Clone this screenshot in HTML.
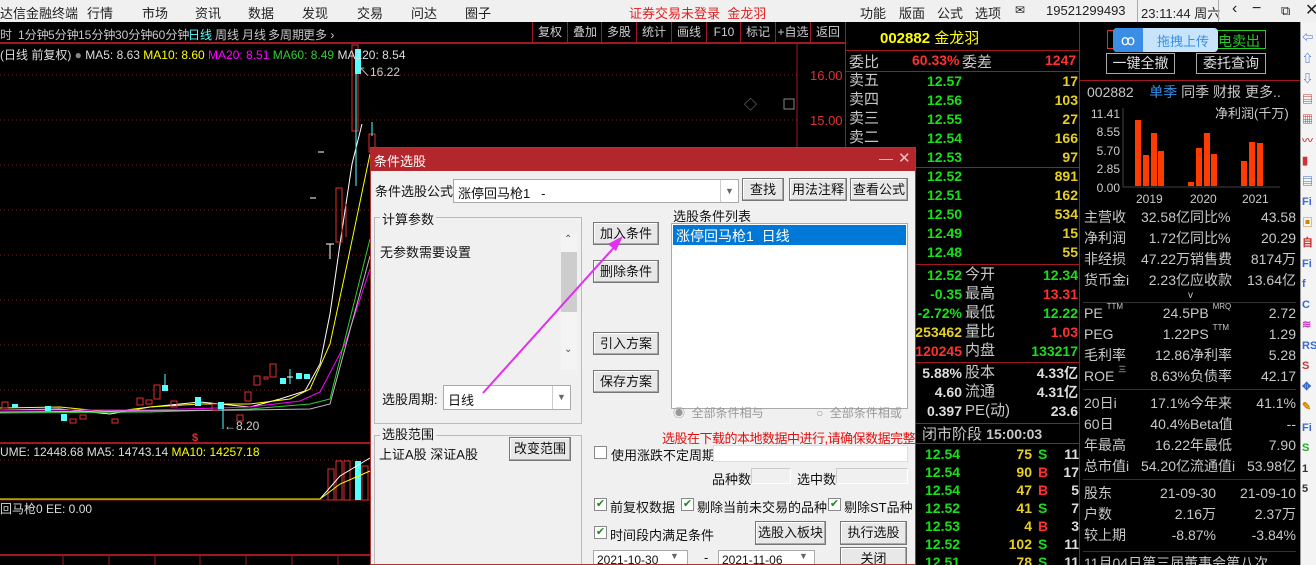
<!DOCTYPE html>
<html style="width:1316px;height:565px;overflow:hidden"><head><meta charset="utf-8">
<style>
*{margin:0;padding:0;box-sizing:border-box}
body{width:1316px;height:565px;overflow:hidden;background:#000;position:relative;font-family:"Liberation Sans","Noto Sans CJK SC",sans-serif;font-size:13px;color:#c8c8c8}
.a{position:absolute;white-space:nowrap}
.menu{left:0;top:0;width:1316px;height:22px;background:#f0f0f0;color:#222;font-size:13px}
.menu .a{top:3px}
.bar2{left:0;top:22px;width:845px;height:22px;background:#000;border-bottom:2px solid #a01820;color:#c8c8c8;font-size:12px}
.bar2 .a{top:4px}
.cell{top:0 !important;height:20px;border-left:1px solid #a01820;text-align:center;width:35px;line-height:20px;font-size:12px;color:#ccc}
.q{font-size:14px;font-weight:bold}
.g{color:#18e018}.y{color:#e8d020}.r{color:#ff3030}.w{color:#ddd}
.lbl{font-size:15px;color:#c8c8c8;font-weight:normal}
.hl{position:absolute;height:1px;background:#a01820}
.f{font-size:14px;color:#c8c8c8}
.sp{font-size:8px;vertical-align:top;line-height:0;position:relative;top:4px}
.dlg{left:370px;top:147px;width:546px;height:418px;overflow:hidden;background:#f0f0f0;border:1px solid #a33;color:#111;font-size:13px}
.btn{position:absolute;background:#e8e8e8;border:1px solid #777;box-shadow:inset -1px -1px 0 #aaa,inset 1px 1px 0 #fff;text-align:center;font-size:13px;color:#111}
.box{position:absolute;background:#fff;border:1px solid #aaa}
.grp{position:absolute;border:1px solid #bbb}
.cb{position:absolute;width:13px;height:13px;border:1px solid #888;background:#fff;font-size:11px;line-height:11px;color:#1a8a1a;text-align:center}
</style></head><body>

<div class="a menu">
<span class="a" style="left:0">达信金融终端</span><span class="a" style="left:87px">行情</span><span class="a" style="left:142px">市场</span><span class="a" style="left:195px">资讯</span><span class="a" style="left:248px">数据</span><span class="a" style="left:302px">发现</span><span class="a" style="left:357px">交易</span><span class="a" style="left:411px">问达</span><span class="a" style="left:465px">圈子</span>
<span class="a" style="left:629px;color:#e02020;font-size:13px">证券交易未登录&nbsp;&nbsp;金龙羽</span>
<span class="a" style="left:860px">功能</span><span class="a" style="left:899px">版面</span><span class="a" style="left:937px">公式</span><span class="a" style="left:975px">选项</span><span class="a" style="left:1015px;font-size:12px">✉</span><span class="a" style="left:1046px;font-size:13px">19521299493</span>
<div class="a" style="left:1137px;top:0;width:1px;height:22px;background:#aaa"></div>
<span class="a" style="left:1141px;font-size:13px">23:11:44 周六</span>
<div class="a" style="left:1218px;top:0;width:1px;height:22px;background:#aaa"></div>
<span class="a" style="left:1232px;font-size:16px;top:0">‹</span><span class="a" style="left:1252px;font-size:16px;top:0">−</span><span class="a" style="left:1281px;font-size:13px">⧉</span><span class="a" style="left:1305px;font-size:16px;top:0">✕</span>
</div>

<div class="a bar2">
<span class="a" style="left:0">时</span><span class="a" style="left:18px">1分钟</span><span class="a" style="left:48px">5分钟</span><span class="a" style="left:78px">15分钟</span><span class="a" style="left:115px">30分钟</span><span class="a" style="left:152px">60分钟</span><span class="a" style="left:188px;color:#5ff">日线</span><span class="a" style="left:215px">周线</span><span class="a" style="left:242px">月线</span><span class="a" style="left:268px">多周期</span><span class="a" style="left:303px">更多 ›</span>
<div class="a cell" style="left:532px">复权</div><div class="a cell" style="left:567px">叠加</div><div class="a cell" style="left:601px">多股</div><div class="a cell" style="left:636px">统计</div><div class="a cell" style="left:671px">画线</div><div class="a cell" style="left:706px">F10</div><div class="a cell" style="left:740px">标记</div><div class="a cell" style="left:775px">+自选</div><div class="a cell" style="left:810px">返回</div>
</div>

<svg class="a" style="left:0;top:44px" width="845" height="521">
<g stroke="#802020" stroke-dasharray="1,3" stroke-width="1">
<line x1="0" y1="31" x2="797" y2="31"/><line x1="0" y1="76" x2="797" y2="76"/><line x1="0" y1="121" x2="797" y2="121"/><line x1="0" y1="166" x2="797" y2="166"/><line x1="0" y1="211" x2="797" y2="211"/><line x1="0" y1="256" x2="797" y2="256"/><line x1="0" y1="301" x2="797" y2="301"/><line x1="0" y1="346" x2="797" y2="346"/><line x1="0" y1="416" x2="797" y2="416"/>
</g>
<line x1="797" y1="0" x2="797" y2="510" stroke="#a01820"/>
<line x1="0" y1="399" x2="797" y2="399" stroke="#a01820" stroke-width="2"/>
<line x1="0" y1="511" x2="797" y2="511" stroke="#a01820" stroke-width="2"/>
<line x1="0" y1="456" x2="370" y2="456" stroke="#a01820"/>
<text x="810" y="36" fill="#e03030" font-size="13">16.00</text>
<text x="810" y="81" fill="#e03030" font-size="13">15.00</text>
<text x="744" y="65" fill="#888" font-size="13">◇</text>
<rect x="784" y="55" width="10" height="10" fill="none" stroke="#888"/>
<polyline fill="none" stroke="#fff" points="0,366 60,365 110,370 150,363 200,358 250,363 280,355 305,347 320,320 330,270 340,200 352,120 362,80"/>
<polyline fill="none" stroke="#ff0" points="0,364 60,363 110,368 150,363 200,360 250,360 290,355 310,345 330,300 345,230 370,110"/>
<polyline fill="none" stroke="#f0f" points="0,366 100,366 150,366 250,363 300,357 320,348 345,300 370,225"/>
<polyline fill="none" stroke="#3c3" points="0,369 150,368 250,365 310,360 330,355 370,195"/>
<polyline fill="none" stroke="#bbb" points="0,368 250,366 310,365 330,360 370,212"/>
<g fill="none" stroke="#e03030">
<rect x="2" y="358" width="6" height="6"/><rect x="70" y="375" width="6" height="4"/><rect x="80" y="371" width="6" height="4"/><rect x="112" y="375" width="6" height="4"/><rect x="137" y="354" width="6" height="7"/><rect x="146" y="356" width="6" height="4"/><rect x="154" y="341" width="6" height="14"/><rect x="171" y="357" width="6" height="6"/><rect x="212" y="360" width="6" height="6"/><rect x="237" y="371" width="6" height="6"/><rect x="245" y="348" width="6" height="9"/><rect x="254" y="332" width="6" height="9"/><rect x="264" y="333" width="4" height="2"/><rect x="270" y="320" width="6" height="13"/><rect x="336" y="144" width="6" height="54"/><rect x="352" y="1" width="6" height="86"/><rect x="369" y="90" width="6" height="18"/>
<line x1="346" y1="160" x2="346" y2="193"/>
</g>
<g fill="#5ff">
<rect x="12" y="360" width="6" height="4"/><rect x="45" y="362" width="6" height="5"/><rect x="61" y="370" width="6" height="7"/><rect x="162" y="341" width="6" height="6"/><rect x="195" y="353" width="6" height="9"/><rect x="218" y="358" width="6" height="7"/><rect x="280" y="334" width="6" height="6"/><rect x="296" y="329" width="6" height="6"/><rect x="304" y="330" width="6" height="5"/><rect x="355" y="5" width="6" height="25"/>
</g>
<g stroke="#5ff"><line x1="223" y1="358" x2="223" y2="385"/><line x1="165" y1="330" x2="165" y2="347"/><line x1="290" y1="325" x2="290" y2="340"/><line x1="356" y1="19" x2="356" y2="142"/><line x1="372" y1="78" x2="372" y2="92"/></g>
<g stroke="#fff"><line x1="326" y1="200" x2="334" y2="200"/><line x1="330" y1="200" x2="330" y2="215"/><line x1="318" y1="108" x2="324" y2="108"/><line x1="310" y1="154" x2="316" y2="154"/><line x1="287" y1="333" x2="293" y2="333"/></g>
<text x="358" y="32" fill="#ccc" font-size="12">↖16.22</text>
<text x="224" y="386" fill="#ccc" font-size="12">←8.20</text>
<text x="192" y="397" fill="#e03030" font-size="11" font-weight="bold">$</text>
<g fill="none" stroke="#e03030"><rect x="328" y="425" width="6" height="31"/><rect x="336" y="417" width="6" height="39"/><rect x="344" y="417" width="6" height="39"/><rect x="362" y="422" width="6" height="34"/></g>
<rect x="355" y="417" width="6" height="39" fill="#5ff"/>
<polyline fill="none" stroke="#fff" points="0,455 320,455 340,432 370,414"/>
<polyline fill="none" stroke="#ff0" points="0,455 320,455 340,440 370,427"/>
<text x="0" y="412" fill="#ddd" font-size="12">UME: 12448.68  MA5: 14743.14  <tspan fill="#ff0">MA10: 14257.18</tspan></text>
<text x="0" y="469" fill="#ddd" font-size="12">回马枪0  EE: 0.00</text>
<g stroke="#a01820"><line x1="63" y1="511" x2="63" y2="521"/><line x1="109" y1="511" x2="109" y2="521"/><line x1="155" y1="511" x2="155" y2="521"/><line x1="200" y1="511" x2="200" y2="521"/><line x1="246" y1="511" x2="246" y2="521"/><line x1="292" y1="511" x2="292" y2="521"/><line x1="338" y1="511" x2="338" y2="521"/></g>
</svg>
<div class="a" style="left:0;top:46px;font-size:12px;color:#ddd">(日线 前复权) <span style="color:#888">●</span> MA5: 8.63 <span style="color:#ff0">MA10: 8.60</span> <span style="color:#f0f">MA20: 8.51</span> <span style="color:#3c3">MA60: 8.49</span> MA120: 8.54</div>

<div class="a" style="left:845px;top:22px;width:235px;height:543px;border-left:1px solid #a01820;border-right:1px solid #a01820"></div>
<div class="a" style="left:880px;top:27px;font-size:15px;font-weight:bold;color:#ff0">002882 <span style="font-weight:normal">金龙羽</span></div>
<div class="hl" style="left:845px;top:50px;width:235px"></div>
<div class="a lbl" style="left:849px;top:51px">委比</div><div class="a q r" style="left:912px;top:52px">60.33%</div><div class="a lbl" style="left:962px;top:51px">委差</div><div class="a q r" style="left:1045px;top:52px">1247</div>
<div class="hl" style="left:845px;top:71px;width:235px"></div>
<div class="a lbl" style="left:849px;top:71px;line-height:19px">卖五<br>卖四<br>卖三<br>卖二</div>
<div class="a q g" style="left:927px;top:72px;line-height:19px">12.57<br>12.56<br>12.55<br>12.54<br>12.53<br>12.52<br>12.51<br>12.50<br>12.49<br>12.48</div>
<div class="a q y" style="left:1030px;top:72px;width:48px;text-align:right;line-height:19px">17<br>103<br>27<br>166<br>97<br>891<br>162<br>534<br>15<br>55</div>
<div class="hl" style="left:845px;top:167px;width:235px"></div>
<div class="hl" style="left:845px;top:264px;width:235px"></div>
<div class="a q" style="left:900px;top:266px;width:62px;text-align:right;line-height:19px"><span class="g">12.52</span><br><span class="g">-0.35</span><br><span class="g">-2.72%</span><br><span class="y">253462</span><br><span class="r">120245</span></div>
<div class="a lbl" style="left:965px;top:265px;line-height:19px">今开<br>最高<br>最低<br>量比<br>内盘</div>
<div class="a q" style="left:1020px;top:266px;width:58px;text-align:right;line-height:19px"><span class="g">12.34</span><br><span class="r">13.31</span><br><span class="g">12.22</span><br><span class="r">1.03</span><br><span class="g">133217</span></div>
<div class="hl" style="left:845px;top:362px;width:235px"></div>
<div class="a q w" style="left:900px;top:364px;width:62px;text-align:right;line-height:19px">5.88%<br>4.60<br>0.397</div>
<div class="a lbl" style="left:965px;top:363px;line-height:19px">股本<br>流通<br>PE(动)</div>
<div class="a q w" style="left:1020px;top:364px;width:58px;text-align:right;line-height:19px">4.33亿<br>4.31亿<br>23.6</div>
<div class="hl" style="left:845px;top:423px;width:235px"></div>
<div class="a lbl" style="left:922px;top:423px">闭市阶段 <b style="font-size:14px">15:00:03</b></div>
<div class="hl" style="left:845px;top:443px;width:235px"></div>
<div class="a q g" style="left:925px;top:445px;line-height:18px">12.54<br>12.54<br>12.54<br>12.52<br>12.53<br>12.52<br>12.51</div>
<div class="a q y" style="left:990px;top:445px;width:42px;text-align:right;line-height:18px">75<br>90<br>47<br>41<br>4<br>102<br>78</div>
<div class="a q" style="left:1038px;top:445px;line-height:18px"><span class="g">S</span><br><span class="r">B</span><br><span class="r">B</span><br><span class="g">S</span><br><span class="r">B</span><br><span class="g">S</span><br><span class="g">S</span></div>
<div class="a q w" style="left:1055px;top:445px;width:24px;text-align:right;line-height:18px">11<br>17<br>5<br>7<br>3<br>11<br>11</div>

<div class="a" style="left:1107px;top:30px;width:62px;height:19px;border:1px solid #e03030"></div>
<div class="a" style="left:1214px;top:30px;width:52px;height:19px;border:1px solid #2c2;color:#2c2;font-size:14px;padding-left:3px">电卖出</div>
<div class="a" style="left:1113px;top:28px;width:105px;height:24px;background:#c8e4fa;border-radius:4px;color:#3a8ee6;font-size:13px;padding:3px 0 0 44px">拖拽上传</div>
<div class="a" style="left:1113px;top:28px;width:30px;height:24px;background:#3a8ee6;border-radius:4px 0 0 4px;color:#fff;text-align:center;font-size:14px;line-height:24px">ꝏ</div>
<div class="a" style="left:1106px;top:53px;width:69px;height:21px;border:1px solid #aaa;color:#ddd;font-size:14px;text-align:center;line-height:19px">一键全撤</div>
<div class="a" style="left:1196px;top:53px;width:70px;height:21px;border:1px solid #aaa;color:#ddd;font-size:14px;text-align:center;line-height:19px">委托查询</div>
<div class="hl" style="left:1080px;top:80px;width:220px"></div>
<div class="a f" style="left:1087px;top:82px">002882 &nbsp; &nbsp;<span style="color:#3a8ee6">单季</span> 同季 财报 更多..</div>
<svg class="a" style="left:1080px;top:104px" width="220" height="104">
<g fill="#ccc" font-size="12" text-anchor="end"><text x="40" y="14">11.41</text><text x="40" y="32">8.55</text><text x="40" y="51">5.70</text><text x="40" y="69">2.85</text><text x="40" y="88">0.00</text></g>
<line x1="43" y1="4" x2="43" y2="83" stroke="#444"/><line x1="43" y1="83" x2="200" y2="83" stroke="#444"/>
<g fill="#ff3c00"><rect x="55" y="16" width="6" height="66"/><rect x="63" y="51" width="6" height="31"/><rect x="71" y="29" width="6" height="53"/><rect x="78" y="47" width="6" height="35"/><rect x="108" y="78" width="6" height="4"/><rect x="116" y="44" width="6" height="38"/><rect x="124" y="29" width="6" height="53"/><rect x="131" y="50" width="6" height="32"/><rect x="161" y="57" width="6" height="25"/><rect x="169" y="38" width="6" height="44"/><rect x="177" y="39" width="6" height="43"/></g>
<text x="135" y="14" fill="#ccc" font-size="13">净利润(千万)</text>
<g fill="#ccc" font-size="12"><text x="56" y="99">2019</text><text x="110" y="99">2020</text><text x="162" y="99">2021</text></g>
</svg>
<div class="a f" style="left:1084px;top:207px;line-height:21px">主营收<br>净利润<br>非经损<br>货币金i</div>
<div class="a f" style="left:1130px;top:207px;width:60px;text-align:right;line-height:21px">32.58亿<br>1.72亿<br>47.22万<br>2.23亿</div>
<div class="a f" style="left:1190px;top:207px;line-height:21px">同比%<br>同比%<br>销售费<br>应收款</div>
<div class="a f" style="left:1240px;top:207px;width:56px;text-align:right;line-height:21px">43.58<br>20.29<br>8174万<br>13.64亿</div>
<div class="a" style="left:1188px;top:290px;font-size:10px;color:#ccc">v</div>
<div class="a" style="left:1083px;top:302px;width:213px;height:1px;background:#333"></div>
<div class="a f" style="left:1084px;top:303px;line-height:21px">PE <span class="sp">TTM</span><br>PEG<br>毛利率<br>ROE <span class="sp">三</span></div>
<div class="a f" style="left:1130px;top:303px;width:60px;text-align:right;line-height:21px">24.5<br>1.22<br>12.86<br>8.63%</div>
<div class="a f" style="left:1190px;top:303px;line-height:21px">PB <span class="sp">MRQ</span><br>PS <span class="sp">TTM</span><br>净利率<br>负债率</div>
<div class="a f" style="left:1240px;top:303px;width:56px;text-align:right;line-height:21px">2.72<br>1.29<br>5.28<br>42.17</div>
<div class="a" style="left:1083px;top:389px;width:213px;height:1px;background:#333"></div>
<div class="a f" style="left:1084px;top:393px;line-height:21px">20日i<br>60日<br>年最高<br>总市值i</div>
<div class="a f" style="left:1130px;top:393px;width:60px;text-align:right;line-height:21px">17.1%<br>40.4%<br>16.22<br>54.20亿</div>
<div class="a f" style="left:1190px;top:393px;line-height:21px">今年来<br>Beta值<br>年最低<br>流通值i</div>
<div class="a f" style="left:1240px;top:393px;width:56px;text-align:right;line-height:21px">41.1%<br>--<br>7.90<br>53.98亿</div>
<div class="a" style="left:1083px;top:479px;width:213px;height:1px;background:#333"></div>
<div class="a f" style="left:1084px;top:483px;line-height:21px">股东<br>户数<br>较上期</div>
<div class="a f" style="left:1150px;top:483px;width:66px;text-align:right;line-height:21px">21-09-30<br>2.16万<br>-8.87%</div>
<div class="a f" style="left:1226px;top:483px;width:70px;text-align:right;line-height:21px">21-09-10<br>2.37万<br>-3.84%</div>
<div class="a" style="left:1083px;top:551px;width:213px;height:1px;background:#333"></div>
<div class="a f" style="left:1084px;top:553px">11月04日第三届董事会第八次</div>

<div class="a" style="left:1300px;top:22px;width:16px;height:543px;background:#f4f4f4;border-left:1px solid #999"></div>
<div class="a" style="left:1302px;top:28px;width:14px;font-size:11px;line-height:20.5px;color:#3a6ad0;font-weight:bold">⇦<br>⇧<br>⇩<br><span style="color:#c33">▤</span><br><span style="color:#c33">▦</span><br><span style="color:#c33">〰</span><br><span style="color:#c33">▮</span><br>▤<br>Fi<br><span style="color:#c80">▣</span><br><span style="color:#c33">自</span><br>Fi<br>f<br>C<br><span style="color:#c3c">≋</span><br>RS<br><span style="color:#c33">S</span><br>✥<br><span style="color:#c80">✎</span><br>Fi<br><span style="color:#2a2">S</span><br><span style="color:#333">1</span><br><span style="color:#333">5</span></div>

<div class="a dlg">
<div class="a" style="left:0;top:0;width:544px;height:23px;background:#b3262c;color:#fff;font-size:13px;padding:3px 3px">条件选股</div>
<div class="a" style="left:508px;top:2px;color:#f0c0c0;font-size:14px">—</div><div class="a" style="left:527px;top:1px;color:#f0c0c0;font-size:15px">✕</div>
<div class="a" style="left:4px;top:33px">条件选股公式</div>
<div class="box" style="left:82px;top:31px;width:286px;height:24px;padding:3px 4px">涨停回马枪1 &nbsp; -</div>
<div class="a" style="left:349px;top:32px;width:18px;height:22px;border-left:1px solid #ccc;color:#666;font-size:9px;text-align:center;line-height:22px">▼</div>
<div class="btn" style="left:371px;top:30px;width:42px;height:23px;line-height:21px">查找</div>
<div class="btn" style="left:418px;top:30px;width:58px;height:23px;line-height:21px">用法注释</div>
<div class="btn" style="left:479px;top:30px;width:58px;height:23px;line-height:21px">查看公式</div>
<div class="grp" style="left:3px;top:69px;width:208px;height:207px"></div>
<div class="a" style="left:9px;top:61px;background:#f0f0f0;padding:0 2px">计算参数</div>
<div class="a" style="left:9px;top:94px">无参数需要设置</div>
<div class="a" style="left:190px;top:87px;width:16px;height:135px;background:#f4f4f4"></div>
<div class="a" style="left:190px;top:104px;width:16px;height:60px;background:#cdcdcd"></div>
<div class="a" style="left:193px;top:86px;font-size:10px;color:#555">⌃</div><div class="a" style="left:193px;top:196px;font-size:10px;color:#555">⌄</div>
<div class="a" style="left:11px;top:241px">选股周期:</div>
<div class="box" style="left:72px;top:237px;width:128px;height:25px;padding:4px 4px">日线</div>
<div class="a" style="left:181px;top:238px;width:18px;height:23px;border-left:1px solid #ccc;color:#666;font-size:9px;text-align:center;line-height:23px">▼</div>
<div class="btn" style="left:222px;top:74px;width:66px;height:23px;line-height:21px">加入条件</div>
<div class="btn" style="left:222px;top:112px;width:66px;height:23px;line-height:21px">删除条件</div>
<div class="btn" style="left:222px;top:184px;width:66px;height:23px;line-height:21px">引入方案</div>
<div class="btn" style="left:222px;top:222px;width:66px;height:23px;line-height:21px">保存方案</div>
<div class="a" style="left:302px;top:58px">选股条件列表</div>
<div class="box" style="left:300px;top:75px;width:237px;height:186px"></div>
<div class="a" style="left:302px;top:77px;width:233px;height:20px;background:#0078d7;color:#fff;font-size:14px;padding:1px 3px">涨停回马枪1 &nbsp;日线</div>
<div class="a" style="left:302px;top:256px;color:#999;font-size:12px">◉ &nbsp;全部条件相与</div>
<div class="a" style="left:445px;top:256px;color:#999;font-size:12px">○ &nbsp;全部条件相或</div>
<div class="a" style="left:291px;top:280px;color:#e01010;font-size:13px;letter-spacing:-0.5px">选股在下载的本地数据中进行,请确保数据完整</div>
<div class="grp" style="left:3px;top:287px;width:208px;height:140px"></div>
<div class="a" style="left:9px;top:276px;background:#f0f0f0;padding:0 2px">选股范围</div>
<div class="a" style="left:8px;top:296px">上证A股 深证A股</div>
<div class="btn" style="left:138px;top:289px;width:62px;height:24px;line-height:22px">改变范围</div>
<div class="cb" style="left:223px;top:298px"></div><div class="a" style="left:240px;top:297px">使用涨跌不定周期</div>
<div class="box" style="left:342px;top:297px;width:195px;height:17px;border-color:#ddd"></div>
<div class="a" style="left:341px;top:321px">品种数</div><div class="a" style="left:380px;top:320px;width:40px;height:16px;border:1px solid #ccc;border-right-color:#fff;border-bottom-color:#fff"></div>
<div class="a" style="left:426px;top:321px">选中数</div><div class="a" style="left:465px;top:320px;width:72px;height:16px;border:1px solid #ccc;border-right-color:#fff;border-bottom-color:#fff"></div>
<div class="cb" style="left:223px;top:350px">✔</div><div class="a" style="left:239px;top:349px">前复权数据</div>
<div class="cb" style="left:310px;top:350px">✔</div><div class="a" style="left:326px;top:349px">剔除当前未交易的品种</div>
<div class="cb" style="left:457px;top:350px">✔</div><div class="a" style="left:473px;top:349px">剔除ST品种</div>
<div class="cb" style="left:223px;top:378px">✔</div><div class="a" style="left:239px;top:377px">时间段内满足条件</div>
<div class="btn" style="left:384px;top:373px;width:71px;height:24px;line-height:22px">选股入板块</div>
<div class="btn" style="left:469px;top:373px;width:67px;height:24px;line-height:22px">执行选股</div>
<div class="box" style="left:222px;top:402px;width:95px;height:20px;font-size:12px;padding:2px 3px">2021-10-30</div>
<div class="a" style="left:299px;top:403px;font-size:9px;color:#666">▼</div>
<div class="a" style="left:333px;top:402px">-</div>
<div class="box" style="left:347px;top:402px;width:97px;height:20px;font-size:12px;padding:2px 3px">2021-11-06</div>
<div class="a" style="left:428px;top:403px;font-size:9px;color:#666">▼</div>
<div class="btn" style="left:469px;top:399px;width:67px;height:24px;line-height:22px">关闭</div>
</div>

<svg class="a" style="left:0;top:0" width="1316" height="565">
<line x1="483" y1="393" x2="618" y2="243" stroke="#e030f0" stroke-width="2"/>
<polygon points="623,236 608,244 616,251" fill="#e030f0"/>
</svg>
</body></html>
